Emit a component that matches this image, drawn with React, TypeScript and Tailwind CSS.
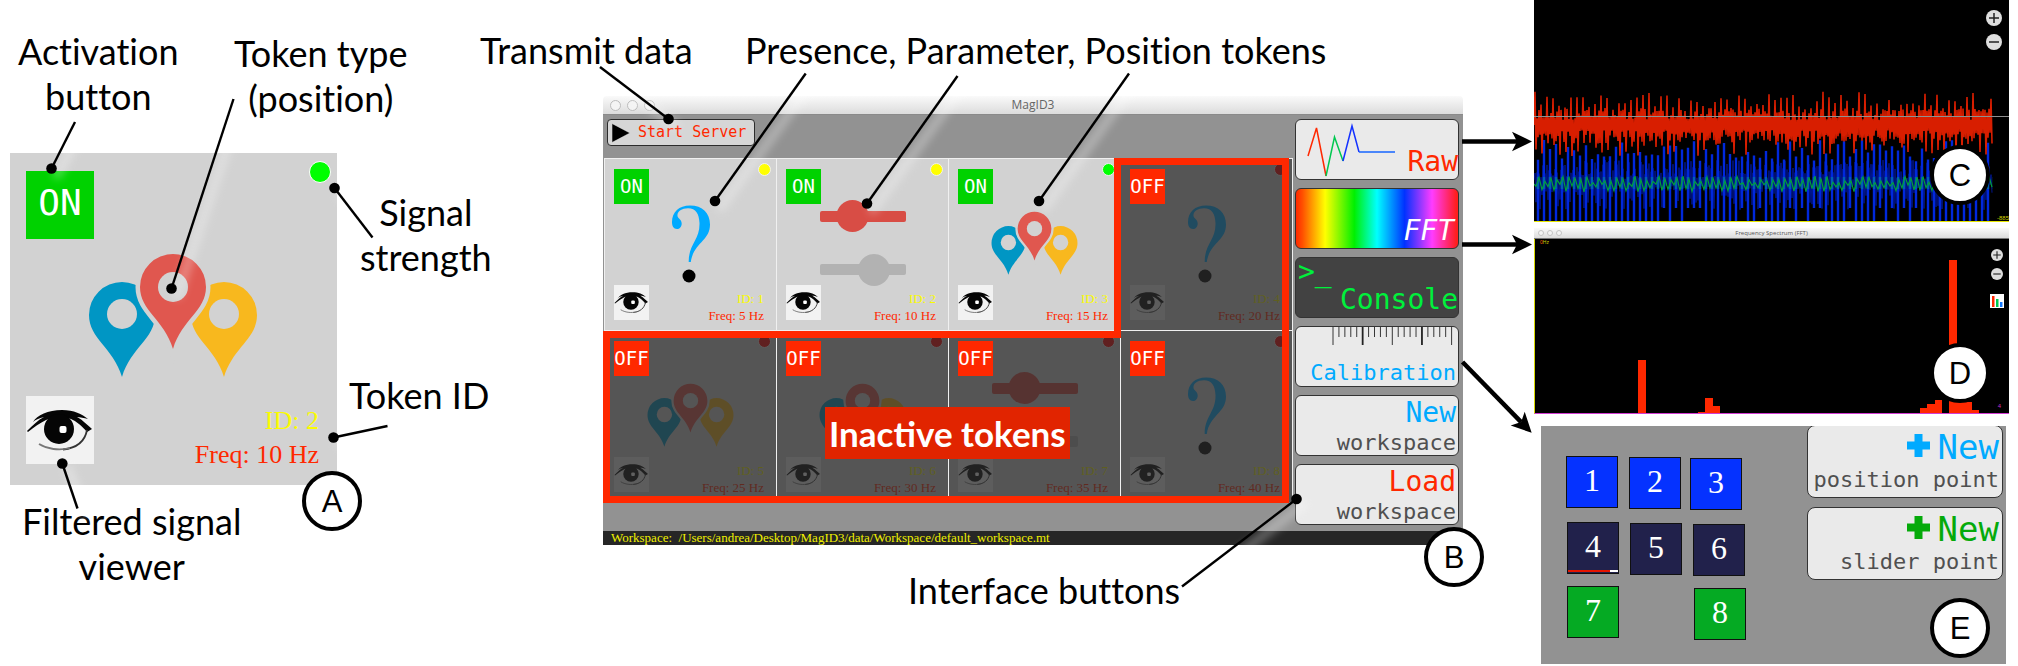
import React from "react";

type TokenKind = "presence" | "parameter" | "position";

interface Token {
  id: number;
  freq: number;
  kind: TokenKind;
  active: boolean;
  signal: string;
}

const TOKENS: Token[] = [
  { id: 1, freq: 5, kind: "presence", active: true, signal: "bg-[#ffff00]" },
  { id: 2, freq: 10, kind: "parameter", active: true, signal: "bg-[#ffff00]" },
  { id: 3, freq: 15, kind: "position", active: true, signal: "bg-[#00ff00]" },
  { id: 4, freq: 20, kind: "presence", active: false, signal: "bg-[#ff0000]" },
  { id: 5, freq: 25, kind: "position", active: false, signal: "bg-[#ff0000]" },
  { id: 6, freq: 30, kind: "position", active: false, signal: "bg-[#ff0000]" },
  { id: 7, freq: 35, kind: "parameter", active: false, signal: "bg-[#ff0000]" },
  { id: 8, freq: 40, kind: "presence", active: false, signal: "bg-[#ff0000]" },
];

/* ---------- drawings ---------- */

const PIN = "M-33 0A33 33 0 0 1 33 0C33 24 9 32 0 62C-9 32 -33 24 -33 0Z";

function Pins({ className }: { className: string }) {
  return (
    <svg viewBox="-85 -34 170 126" className={className} aria-hidden="true">
      <g transform="translate(-51 28)">
        <path d={PIN} fill="#0096c4" />
        <circle r="15" cy="-1" fill="#d2d2d2" />
      </g>
      <g transform="translate(51 28)">
        <path d={PIN} fill="#f8b81e" />
        <circle r="15" cy="-1" fill="#d2d2d2" />
      </g>
      <path d={PIN} fill="#e0574f" stroke="#d2d2d2" strokeWidth="9" paintOrder="stroke" />
      <circle r="15" fill="#d2d2d2" />
    </svg>
  );
}

function Question() {
  return (
    <svg viewBox="66 46 40 80" className="h-20 w-10" aria-hidden="true">
      <path
        d="M67 64C67 54 74 47.5 85 47.5C97.500 47.500 105 55 105 66.500C105 83 88.500 85 85.800 104L83.700 104C83.500 86 95 82 94.500 65C94 56 91 50.300 83 50.300C76.500 50.300 72 53.500 72.500 58C73 60.500 76.700 61.500 76.700 65.500C76.700 69 74.500 71 72 71C68.500 71 67 68 67 64Z"
        fill="#00aaff"
      />
      <circle cx="84" cy="118" r="6.500" fill="#000" />
    </svg>
  );
}

function Sliders() {
  return (
    <svg viewBox="0 0 86 86" className="size-[86px]" aria-hidden="true">
      <rect y="11" width="86" height="11" rx="2" fill="#d84d45" />
      <circle cx="32.500" cy="16" r="16" fill="#d84d45" />
      <rect y="64" width="86" height="11" rx="2" fill="#b2b2b2" />
      <circle cx="54" cy="70" r="16" fill="#b2b2b2" />
    </svg>
  );
}

function Eye() {
  return (
    <svg viewBox="0 0 68 68" className="size-full" aria-hidden="true">
      <path
        d="M1 35C7 29 12 24 18 21C13 22 9 24 7 26C11 19 22 14 36 14C48 14 56 18 62 23C58 22 54 21 51 21C57 24 61 29 66 33L61 36C56 30 50 25 45 23C36 20 26 21 20 24C14 27 8 31 2 36Z"
        fill="#050505"
      />
      <circle cx="33" cy="33" r="15" fill="#050505" />
      <rect x="33.500" y="30" width="7" height="7" rx="2" fill="#fff" />
      <path d="M61 34C59 45 51 52 37 53.500" fill="none" stroke="#333" strokeWidth="1.800" />
      <path d="M13 48C21 53 33 55 44 52" fill="none" stroke="#777" strokeWidth="1.800" />
    </svg>
  );
}

function ZoomButtons({ size }: { size: "lg" | "sm" }) {
  const box =
    size === "lg"
      ? "block size-4 rounded-full bg-[#dedede]"
      : "block size-3 rounded-full bg-[#dedede]";
  return (
    <>
      <button type="button" aria-label="Zoom in" className={box}>
        <svg viewBox="0 0 16 16" className="size-full">
          <path d="M8 3v10M3 8h10" stroke="#222" strokeWidth="1.500" />
        </svg>
      </button>
      <button type="button" aria-label="Zoom out" className={box}>
        <svg viewBox="0 0 16 16" className="size-full">
          <path d="M3 8h10" stroke="#222" strokeWidth="1.500" />
        </svg>
      </button>
    </>
  );
}

function Badge({ letter, className }: { letter: string; className: string }) {
  return (
    <div
      className={`absolute z-20 flex size-[60px] items-center justify-center rounded-full border-4 border-black bg-white font-['Liberation_Sans',sans-serif] text-[31px] leading-none text-black ${className}`}
    >
      {letter}
    </div>
  );
}

function Label({ children, className }: { children: React.ReactNode; className: string }) {
  return (
    <p
      className={`absolute z-10 text-center font-[Lato,sans-serif] text-[36px] leading-[45px] [font-variant-ligatures:none] whitespace-nowrap text-black ${className}`}
    >
      {children}
    </p>
  );
}

/* ---------- panel A: enlarged token ---------- */

function TokenCard() {
  return (
    <div className="flex h-[332px] w-[327px] bg-[#d2d2d2] pt-[18px] pb-[21px] pl-4">
      <div className="flex flex-col justify-between">
        <button
          type="button"
          className="size-[68px] bg-[#00d200] pb-1 font-['DejaVu_Sans_Mono',monospace] text-[36px] leading-none text-white"
        >
          ON
        </button>
        <button type="button" aria-label="View filtered signal" className="size-[68px] bg-[#f2f2f2]">
          <Eye />
        </button>
      </div>
      <div className="-ml-[6px] flex flex-1 items-start pt-[82px]">
        <Pins className="h-[126px] w-[170px] shrink-0" />
      </div>
      <div className="-ml-20 flex flex-col items-end justify-between">
        <span className="-mt-[10px] mr-[6px] size-[22px] rounded-full border border-white bg-[#00ff00]" />
        <p className="-mb-2 pr-[18px] text-right font-['Liberation_Serif',serif] text-[26px] leading-[34px] whitespace-nowrap text-[#ff2800]">
          <span className="text-[#fbfb00]">ID: 2</span>
          <br />
          Freq: 10 Hz
        </p>
      </div>
    </div>
  );
}

/* ---------- panel B: main window ---------- */

function TokenCell({ token }: { token: Token }) {
  return (
    <div className="relative flex size-[172px] justify-between border-t border-l border-[#f0f0f0] bg-[#d2d2d2]">
      <div className="flex flex-col justify-between py-[10px] pl-[9px]">
        <button
          type="button"
          className={`z-10 size-[35px] font-['DejaVu_Sans_Mono',monospace] text-[19px] leading-none text-white ${
            token.active ? "bg-[#00d200]" : "bg-[#ff2800]"
          }`}
        >
          {token.active ? "ON" : "OFF"}
        </button>
        <button type="button" aria-label={`View signal of token ${token.id}`} className="size-[35px] bg-[#f2f2f2]">
          <Eye />
        </button>
      </div>
      <div className="-mx-4 flex flex-1 justify-center">
        {token.kind === "presence" && (
          <div className="pt-[45px]">
            <Question />
          </div>
        )}
        {token.kind === "parameter" && (
          <div className="pt-[41px]">
            <Sliders />
          </div>
        )}
        {token.kind === "position" && (
          <div className="pt-[52px]">
            <Pins className="h-[65px] w-[87px]" />
          </div>
        )}
      </div>
      <div className="flex w-[44px] flex-col items-end justify-between pt-1">
        <span className={`mr-[5px] size-[13px] rounded-full border border-[#f0f0f0] ${token.signal}`} />
        <p className="pr-3 pb-[6px] text-right font-['Liberation_Serif',serif] text-[13px] leading-[17px] whitespace-nowrap text-[#ff2800]">
          <span className="text-[#fbfb00]">ID: {token.id}</span>
          <br />
          Freq: {token.freq} Hz
        </p>
      </div>
      {!token.active && <div className="absolute inset-0 bg-[#2b2b2b]/75" />}
    </div>
  );
}

function SideButton({ children, className }: { children: React.ReactNode; className: string }) {
  return (
    <button
      type="button"
      className={`relative flex h-[61px] flex-col items-end rounded-md border border-[#333] font-['DejaVu_Sans_Mono',monospace] text-[28px] leading-7 ${className}`}
    >
      {children}
    </button>
  );
}

function Sidebar() {
  const ticks = Array.from({ length: 21 }, (_, i) => i);
  return (
    <nav className="flex w-[170px] shrink-0 flex-col gap-2 pt-1 pr-1 pl-[2px]">
      <SideButton className="justify-end bg-[#eaeaea] pb-[3px] text-[#ff2800]">
        <svg viewBox="0 0 104 60" className="absolute top-0 left-0 h-[60px] w-[104px]" fill="none" strokeWidth="1.500">
          <path d="M12 36L20.500 8L30 56" stroke="#ff2800" />
          <path d="M30 56L38.500 17L47 41" stroke="#00c850" />
          <path d="M47 41L56 6L63 32" stroke="#1432ff" />
          <path d="M63 32H99" stroke="#1464ff" />
        </svg>
        Raw
      </SideButton>
      <SideButton className="justify-end bg-[linear-gradient(to_right,#ff2800_0%,#ff5000_4%,#ffff00_18%,#00f000_36%,#00ffff_50%,#0032ff_67%,#ff3cff_84%,#ff1e1e_99%)] pb-[3px] text-white italic">
        <span className="pr-1">FFT</span>
      </SideButton>
      <SideButton className="justify-end bg-[#424242] pb-[3px] text-[#00f03c]">
        <span className="self-start pl-[2px]">&gt;_</span>
        <span>Console</span>
      </SideButton>
      <SideButton className="justify-end bg-[#eaeaea] pr-[2px] pb-px">
        <svg viewBox="0 0 162 20" className="absolute top-0 left-0 h-5 w-[162px]">
          {ticks.map((i) => (
            <path
              key={i}
              d={`M${37 + i * 5.93} 0V${i % 5 === 0 ? 18 : 10}`}
              stroke="#222"
              strokeWidth={i === 5 || i === 15 ? 1.8 : 0.9}
            />
          ))}
        </svg>
        <span className="text-[22px] leading-6 text-[#00aaff]">Calibration</span>
      </SideButton>
      <SideButton className="justify-between bg-[#eaeaea] pt-[3px] pr-[2px]">
        <span className="text-[#00aaff]">New</span>
        <span className="text-[22px] leading-6 text-[#505050]">workspace</span>
      </SideButton>
      <SideButton className="justify-between bg-[#eaeaea] pt-[3px] pr-[2px]">
        <span className="text-[#ff2800]">Load</span>
        <span className="text-[22px] leading-6 text-[#505050]">workspace</span>
      </SideButton>
    </nav>
  );
}

function MainWindow() {
  return (
    <div className="mt-24 flex w-[860px] flex-col">
      <header className="relative flex h-[19px] items-center justify-center rounded-t-sm border-b border-[#8a8a8a] bg-gradient-to-b from-[#fafafa] to-[#dcdcdc]">
        <div className="absolute top-1 left-[7px] flex gap-[6px]">
          <i className="size-[11px] rounded-full border border-[#bcbcbc] bg-[#f4f4f4]" />
          <i className="size-[11px] rounded-full border border-[#bcbcbc] bg-[#f4f4f4]" />
          <i className="size-[11px] rounded-full border border-[#bcbcbc] bg-[#f4f4f4]" />
        </div>
        <h1 className="font-['Open_Sans',sans-serif] text-[12px] leading-4 text-[#666]">MagID3</h1>
      </header>
      <div className="flex justify-between bg-[#929292]">
        <main className="flex flex-col pl-px">
          <div className="flex h-[43px] items-start pt-1 pl-[3px]">
            <button
              type="button"
              className="flex h-[27px] w-[148px] items-center gap-2 rounded-sm border border-[#2c2c2c] bg-[#d6d6d6] pl-1 font-['DejaVu_Sans_Mono',monospace] text-[15px] leading-none text-[#ff2800]"
            >
              <svg viewBox="0 0 18 20" className="h-5 w-[18px]" aria-hidden="true">
                <path d="M0 0.500V19.500L18 10Z" fill="#000" stroke="#f4f4f4" strokeWidth="0.500" />
              </svg>
              Start Server
            </button>
          </div>
          <section className="relative grid grid-cols-[repeat(4,172px)] border-r border-[#f0f0f0]">
            {TOKENS.map((t) => (
              <TokenCell key={t.id} token={t} />
            ))}
            <svg
              viewBox="0 0 690 348"
              className="absolute top-0 -left-px z-10 h-[348px] w-[690px]"
              fill="none"
              aria-hidden="true"
            >
              <path d="M514.500 3.500H682.500V341.500H3.500V176.500H514.500Z" stroke="#ff2800" strokeWidth="7" />
            </svg>
            <p className="absolute top-[249px] left-[221px] z-10 bg-[#e12400] px-1 font-[Lato,sans-serif] text-[35px] leading-[52px] font-bold whitespace-nowrap text-white">
              Inactive tokens
            </p>
          </section>
          <div className="h-[29px]" />
        </main>
        <Sidebar />
      </div>
      <footer className="h-[14px] bg-[#262626] pl-2 font-['Liberation_Serif',serif] text-[13px] leading-[14px] whitespace-pre text-[#f0f000]">
        {"Workspace:  /Users/andrea/Desktop/MagID3/data/Workspace/default_workspace.mt"}
      </footer>
    </div>
  );
}

/* ---------- panels C, D, E ---------- */

function makeNoise(seed: number) {
  let s = seed;
  return () => {
    s = (s * 16807) % 2147483647;
    return s / 2147483647;
  };
}

function signalPaths() {
  const r = makeNoise(4711);
  let red = "M0 125";
  let blue = "";
  let blueSoft = "M0 180";
  let green = "M0 184";
  for (let x = 1; x < 459; x += 2) {
    const peak = x % 6 === 1;
    const top = peak ? 91 + r() * 20 : 108 + r() * 12;
    const low = peak ? 136 + r() * 20 : 130 + r() * 14;
    red += `L${x} ${top.toFixed(1)}L${x + 1} ${low.toFixed(1)}`;
    blueSoft += `L${x} ${(160 + r() * 20).toFixed(1)}L${x + 1} ${(184 + r() * 26).toFixed(1)}`;
  }
  for (let x = 4; x < 459; x += 6) {
    blue += `M${x} ${(140 + r() * 22).toFixed(1)}V${r() > 0.2 ? 221 : 208}`;
  }
  for (let x = 2; x < 459; x += 3) {
    green += `L${x} ${(x % 2 ? 176 + r() * 7 : 184 + r() * 8).toFixed(1)}`;
  }
  return { red, blue, blueSoft, green };
}

const SIGNAL = signalPaths();

function RawPanel() {
  return (
    <section className="relative border-b border-[#e6e600] bg-black">
      <svg viewBox="0 0 475 221" preserveAspectRatio="none" className="block h-[221px] w-full" fill="none">
        <path d={SIGNAL.blueSoft} stroke="#001690" strokeWidth="1" />
        <path d={SIGNAL.blue} stroke="#0028dc" strokeWidth="2.400" />
        <path d="M0 183H459" stroke="#0078a0" strokeWidth="12" strokeDasharray="2.400 3.600" strokeDashoffset="-2.800" opacity="0.7" />
        <path d={SIGNAL.green} stroke="#00a03c" strokeWidth="1.200" />
        <path d={SIGNAL.red} stroke="#d81e00" strokeWidth="1.600" />
        <path d="M0 116.500H475" stroke="#909090" strokeWidth="1" />
      </svg>
      <div className="absolute top-[10px] right-[7px] flex flex-col gap-2">
        <ZoomButtons size="lg" />
      </div>
      <span className="absolute right-0 bottom-0 font-['Liberation_Sans',sans-serif] text-[6px] leading-[6px] text-[#d0d000]">
        -885
      </span>
      <Badge letter="C" className="top-[145px] right-[19px]" />
    </section>
  );
}

const BARS: [number, number, number][] = [
  [103, 8, 53],
  [163, 7, 1],
  [170, 8, 15],
  [178, 7, 7],
  [385, 7, 5],
  [392, 8, 9],
  [400, 7, 13],
  [414, 8, 153],
  [422, 15, 11],
  [437, 7, 3],
];

function SpectrumPanel() {
  return (
    <section className="relative mt-[6px]">
      <header className="relative flex h-[11px] items-center justify-center border-b border-[#777] bg-gradient-to-b from-[#fafafa] to-[#dcdcdc]">
        <div className="absolute top-[2px] left-1 flex gap-[3px]">
          <i className="size-[6px] rounded-full border border-[#c4c4c4] bg-[#f4f4f4]" />
          <i className="size-[6px] rounded-full border border-[#c4c4c4] bg-[#f4f4f4]" />
          <i className="size-[6px] rounded-full border border-[#c4c4c4] bg-[#f4f4f4]" />
        </div>
        <h2 className="font-['Open_Sans',sans-serif] text-[6px] leading-[10px] text-[#555]">Frequency Spectrum (FFT)</h2>
      </header>
      <div className="relative border-b border-l border-b-[#d23cd2] border-l-[#d8d800] bg-black">
        <svg viewBox="0 0 474 174" preserveAspectRatio="none" className="block h-[174px] w-full">
          {BARS.map(([x, w, h]) => (
            <rect key={x} x={x} y={174 - h} width={w} height={h} fill="#ff2800" />
          ))}
        </svg>
        <span className="absolute top-px left-[5px] font-['Liberation_Sans',sans-serif] text-[5px] leading-[5px] text-[#d0d000]">
          <span className="text-[#ff5000]">0</span>Hz
        </span>
        <span className="absolute right-[8px] bottom-1 font-['Liberation_Sans',sans-serif] text-[6px] leading-[6px] text-[#c832c8]">
          4
        </span>
        <div className="absolute top-[10px] right-[6px] flex flex-col gap-[7px]">
          <ZoomButtons size="sm" />
        </div>
        <button type="button" aria-label="Bar view" className="absolute top-[55px] right-[5px] block size-[14px] bg-white">
          <svg viewBox="0 0 14 14" className="size-full">
            <rect x="2" y="2" width="2.500" height="11" fill="#ff2800" />
            <rect x="6" y="5" width="2.500" height="8" fill="#00c850" />
            <rect x="10" y="8" width="2.500" height="5" fill="#1478ff" />
          </svg>
        </button>
      </div>
      <Badge letter="D" className="top-[115px] right-[19px]" />
    </section>
  );
}

const POINTS = [
  { n: 1, place: "top-[30px] left-[25px] bg-[#0532ff]" },
  { n: 2, place: "top-[31px] left-[88px] bg-[#0532ff]" },
  { n: 3, place: "top-[32px] left-[149px] bg-[#0532ff]" },
  { n: 4, place: "top-[96px] left-[26px] bg-[#21214b]" },
  { n: 5, place: "top-[97px] left-[89px] bg-[#21214b]" },
  { n: 6, place: "top-[98px] left-[152px] bg-[#21214b]" },
  { n: 7, place: "top-[160px] left-[26px] bg-[#05aa23]" },
  { n: 8, place: "top-[162px] left-[153px] bg-[#05aa23]" },
];

function PointButton({ caption, tint }: { caption: string; tint: string }) {
  return (
    <button
      type="button"
      className="flex h-[73px] flex-col items-end justify-between rounded-lg border border-[#333] bg-[#eaeaea] pt-[3px] pr-[3px] pb-1 font-['DejaVu_Sans_Mono',monospace]"
    >
      <span className={`flex items-center gap-2 text-[34px] leading-9 ${tint}`}>
        <svg viewBox="0 0 23 23" className="-mt-1 size-[23px]" fill="currentColor" aria-hidden="true">
          <path d="M7.500 0h8v7.500H23v8h-7.500V23h-8v-7.500H0v-8h7.500Z" />
        </svg>
        New
      </span>
      <span className="text-[22px] leading-[26px] text-[#505050]">{caption}</span>
    </button>
  );
}

function CalibrationPanel() {
  return (
    <section className="relative mt-3 mr-[3px] ml-[7px] flex h-[238px] justify-end overflow-hidden bg-[#929292] pr-[3px]">
      {POINTS.map((p) => (
        <div
          key={p.n}
          className={`absolute flex size-[52px] items-center justify-center border border-[#101010] pb-1 font-['Liberation_Serif',serif] text-[32px] leading-none text-white ${p.place}`}
        >
          {p.n}
          {p.n === 4 && (
            <span className="absolute inset-x-0 bottom-px flex h-[2px] bg-white">
              <span className="w-[42px] bg-[#e61400]" />
            </span>
          )}
        </div>
      ))}
      <div className="-mt-px flex w-[196px] flex-col gap-[9px]">
        <PointButton caption="position point" tint="text-[#00aaff]" />
        <PointButton caption="slider point" tint="text-[#05aa0a]" />
      </div>
      <Badge letter="E" className="top-[172px] right-4" />
    </section>
  );
}

/* ---------- callouts ---------- */

const LINKS: [number, number, number, number][] = [
  [75, 122, 51.5, 168.5],
  [233.5, 99, 171.5, 288.5],
  [372.5, 237.5, 334.5, 188],
  [387.5, 426, 333.5, 437.5],
  [77.5, 508.5, 62.3, 463.5],
  [600, 67, 668.5, 119],
  [805.7, 73.5, 715, 201],
  [957.5, 76, 867, 203.5],
  [1129, 73.5, 1039, 201],
  [1182, 586.5, 1296.5, 499],
];

const ARROWS = [
  "translate(1462 141.500)",
  "translate(1462 244.500)",
  "translate(1462.500 362) rotate(45.700)",
];

function Callouts() {
  return (
    <svg viewBox="0 0 1540 666" className="pointer-events-none absolute top-0 left-0 z-20 h-[666px] w-[1540px]" aria-hidden="true">
      <defs>
        <filter id="glow" x="-20%" y="-20%" width="140%" height="140%">
          <feGaussianBlur stdDeviation="4" />
        </filter>
      </defs>
      <g filter="url(#glow)" stroke="#fff" strokeWidth="9" opacity="0.3" strokeLinecap="round">
        {LINKS.map(([x1, y1, x2, y2]) => (
          <path key={x1} d={`M${x1 + 8} ${y1 + 6}L${x2 + 6} ${y2 + 6}`} />
        ))}
      </g>
      {LINKS.map(([x1, y1, x2, y2]) => (
        <g key={x1}>
          <path d={`M${x1} ${y1}L${x2} ${y2}`} stroke="#000" strokeWidth="2.400" />
          <circle cx={x2} cy={y2} r="5.300" />
        </g>
      ))}
      {ARROWS.map((t, i) => (
        <g key={t} transform={t}>
          <path d={i === 2 ? "M0 0H84" : "M0 0H56"} stroke="#000" strokeWidth="4.500" />
          <path d="M0 -9.800L20 0L0 9.800L5 0Z" transform={i === 2 ? "translate(79 0)" : "translate(50 0)"} />
        </g>
      ))}
    </svg>
  );
}

export default function App() {
  return (
    <div className="relative flex items-start bg-white">
      <section className="relative w-[603px] shrink-0 pt-[153px] pl-[10px]">
        <TokenCard />
        <Label className="top-[29px] left-[18px]">
          Activation
          <br />
          button
        </Label>
        <Label className="top-[31px] left-[234px]">
          Token type
          <br />
          (position)
        </Label>
        <Label className="top-[190px] left-[360px]">
          Signal
          <br />
          strength
        </Label>
        <Label className="top-[373px] left-[349px]">Token ID</Label>
        <Label className="top-[499px] left-[22px]">
          Filtered signal
          <br />
          viewer
        </Label>
        <Label className="top-[28px] left-[480px]">Transmit data</Label>
        <Badge letter="A" className="top-[471px] left-[302px]" />
      </section>

      <section className="relative w-[931px] shrink-0">
        <MainWindow />
        <Label className="top-[28px] left-[142px]">Presence, Parameter, Position tokens</Label>
        <Label className="top-[568px] left-[305px]">Interface buttons</Label>
        <Badge letter="B" className="top-[527px] left-[821px]" />
      </section>

      <div className="mr-[9px] min-w-[460px] flex-1">
        <RawPanel />
        <SpectrumPanel />
        <CalibrationPanel />
      </div>

      <Callouts />
    </div>
  );
}
